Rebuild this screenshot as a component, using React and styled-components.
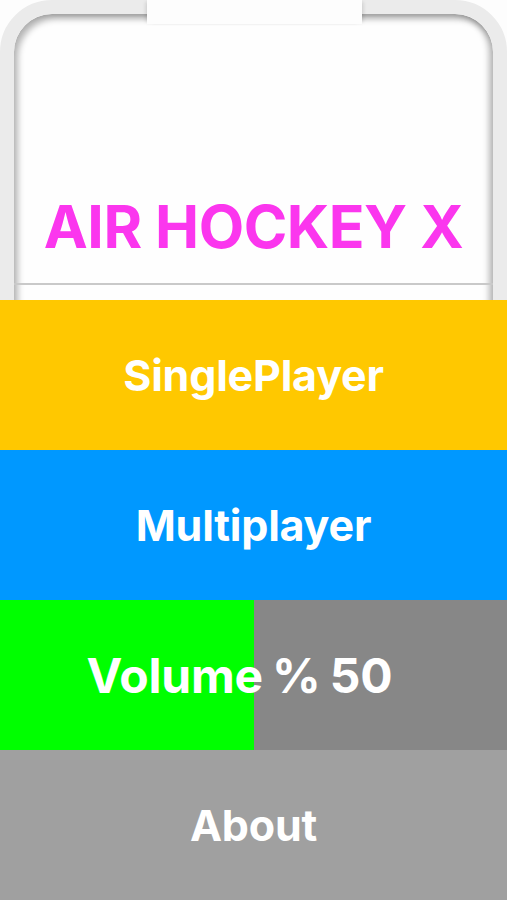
import React from 'react';
import styled, { createGlobalStyle } from 'styled-components';

const GlobalStyle = createGlobalStyle`
  html, body {
    margin: 0;
    padding: 0;
    background: #fdfdfd;
    font-family: Inter, 'Liberation Sans', sans-serif;
  }
`;

const Screen = styled.div`
  width: 507px;
  height: 900px;
  display: flex;
  flex-direction: column;
  overflow: hidden;
  background: #fdfdfd;
`;

const TableArea = styled.div`
  height: 300px;
  position: relative;
  overflow: hidden;
`;

const Rink = styled.div`
  height: 420px;
  box-sizing: border-box;
  border: 14px solid #ebebeb;
  border-radius: 52px 52px 0 0;
  background: #fefefe;
  box-shadow: inset 4px 5px 6px rgba(0, 0, 0, 0.28), inset -4px 0 6px rgba(0, 0, 0, 0.28);
  display: flex;
  flex-direction: column;
  align-items: center;
  padding-top: 183px;
`;

const Goal = styled.div`
  position: absolute;
  top: 0;
  left: 147px;
  width: 215px;
  height: 24px;
  background: #fdfdfd;
  box-shadow: -3px 0 4px -2px rgba(0, 0, 0, 0.15), 3px 0 4px -2px rgba(0, 0, 0, 0.15);
`;

const Title = styled.h1`
  margin: 0;
  font-size: 59px;
  line-height: 1;
  font-weight: 700;
  letter-spacing: -0.5px;
  color: #fb36ee;
`;

const CenterLine = styled.div`
  align-self: stretch;
  height: 2px;
  margin-top: 27px;
  background: #c9c9c9;
`;

const MenuButton = styled.button`
  position: relative;
  height: 150px;
  width: 100%;
  border: none;
  margin: 0;
  padding: 0;
  display: flex;
  align-items: center;
  justify-content: center;
  background: ${(p) => p.$bg};
  color: #fff;
  font-family: Inter, 'Liberation Sans', sans-serif;
  font-size: 43px;
  font-weight: 700;
  letter-spacing: -0.2px;
  overflow: hidden;
`;

const VolumeFill = styled.div`
  position: absolute;
  left: 0;
  top: 0;
  bottom: 0;
  background: #00ff00;
`;

const Label = styled.span`
  position: relative;
  margin-right: ${(p) => p.$shift || 0}px;
  font-size: ${(p) => p.$size || 43}px;
  word-spacing: -2px;
`;

export default function App() {
  const volume = 50;
  return (
    <Screen>
      <GlobalStyle />
      <TableArea>
        <Rink>
          <Title>AIR HOCKEY X</Title>
          <CenterLine />
        </Rink>
        <Goal />
      </TableArea>
      <MenuButton $bg="#ffc800">
        <Label>SinglePlayer</Label>
      </MenuButton>
      <MenuButton $bg="#0098ff">
        <Label>Multiplayer</Label>
      </MenuButton>
      <MenuButton $bg="#878787">
        <VolumeFill style={{ width: `${volume}%` }} />
        <Label $shift={28} $size={48}>Volume % {volume}</Label>
      </MenuButton>
      <MenuButton $bg="#a0a0a0">
        <Label>About</Label>
      </MenuButton>
    </Screen>
  );
}
